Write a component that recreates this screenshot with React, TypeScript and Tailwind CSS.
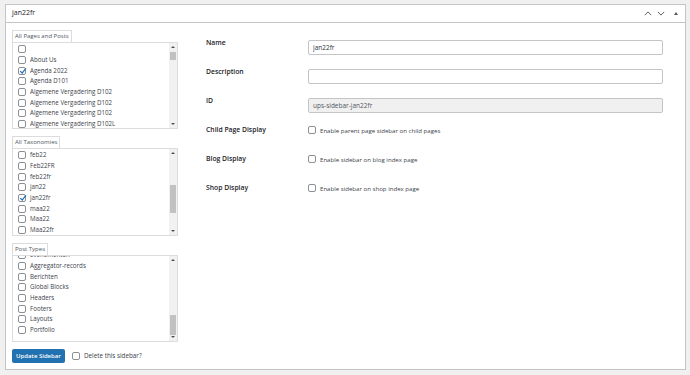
import { useState } from "react";

type Item = { label: string; checked?: boolean };

const pages: Item[] = [
  { label: "" },
  { label: "About Us" },
  { label: "Agenda 2022", checked: true },
  { label: "Agenda D101" },
  { label: "Algemene Vergadering D102" },
  { label: "Algemene Vergadering D102" },
  { label: "Algemene Vergadering D102" },
  { label: "Algemene Vergadering D102L" },
];

const taxonomies: Item[] = [
  { label: "feb22" },
  { label: "Feb22FR" },
  { label: "feb22fr" },
  { label: "jan22" },
  { label: "jan22fr", checked: true },
  { label: "maa22" },
  { label: "Maa22" },
  { label: "Maa22fr" },
];

const postTypes: Item[] = [
  { label: "Evenementen" },
  { label: "Aggregator-records" },
  { label: "Berichten" },
  { label: "Global Blocks" },
  { label: "Headers" },
  { label: "Footers" },
  { label: "Layouts" },
  { label: "Portfolio" },
];

function Box({ checked }: { checked?: boolean }) {
  return (
    <span className="relative flex h-[8px] w-[8px] shrink-0 items-center justify-center rounded-[2px] border border-[#8c8f94] bg-white">
      {checked && (
        <svg viewBox="0 0 10 10" className="absolute -top-[1px] left-0 h-[8px] w-[8px]">
          <path d="M1.5 5.2 L4 7.6 L8.6 1.8" fill="none" stroke="#2271b1" strokeWidth="1.6" />
        </svg>
      )}
    </span>
  );
}

function Checklist({
  title,
  items,
  height,
  thumbTop,
  thumbHeight,
  offset,
}: {
  title: string;
  items: Item[];
  height: string;
  thumbTop: string;
  thumbHeight: string;
  offset: string;
}) {
  return (
    <div className="flex flex-col">
      <div className="flex">
        <div className="h-[12px] border border-b-0 border-[#dcdcde] bg-white px-[2px] text-[6px] leading-[11px] text-[#50575e]">
          {title}
        </div>
      </div>
      <div className={`flex w-[166px] overflow-hidden border border-[#dcdcde] bg-white ${height}`}>
        <div className={`flex-1 overflow-hidden pl-[5px] ${offset}`}>
          {items.map((it, i) => (
            <div key={i} className="flex h-[10.7px] items-center gap-[4px]">
              <Box checked={it.checked} />
              <span className="whitespace-nowrap text-[6.2px] leading-none text-[#3c434a]">{it.label}</span>
            </div>
          ))}
        </div>
        <div className="relative w-[8px] bg-[#f1f1f1]">
          <div className="absolute left-[2px] top-[3px] h-0 w-0 border-x-[2px] border-b-[2px] border-x-transparent border-b-[#505050]" />
          <div className={`absolute left-[1px] w-[6px] bg-[#c1c1c1] ${thumbTop} ${thumbHeight}`} />
          <div className="absolute bottom-[3px] left-[2px] h-0 w-0 border-x-[2px] border-t-[2px] border-x-transparent border-t-[#505050]" />
        </div>
      </div>
    </div>
  );
}

function Row({ label, children }: { label: string; children: React.ReactNode }) {
  return (
    <div className="flex h-[29px] items-center">
      <div className="w-[102px] text-[6.8px] font-semibold text-[#1d2327]">{label}</div>
      <div className="flex-1">{children}</div>
    </div>
  );
}

function Option({ text }: { text: string }) {
  return (
    <div className="flex items-center gap-[4px]">
      <Box />
      <span className="text-[6.1px] text-[#3c434a]">{text}</span>
    </div>
  );
}

export default function App() {
  const [name, setName] = useState("jan22fr");
  const [desc, setDesc] = useState("");

  return (
    <div
      className="h-[375px] w-[690px] bg-[#f0f0f1] pl-[5px] pt-[4px]"
      style={{ fontFamily: '"Open Sans", "Noto Sans", sans-serif' }}
    >
      <div className="h-[366px] w-[681px] border border-[#c3c4c7] bg-white">
        <div className="flex h-[18px] items-center border-b border-[#c3c4c7] pl-[6px] pr-[6px]">
          <span className="flex-1 text-[7px] text-[#1d2327]">jan22fr</span>
          <svg viewBox="0 0 10 6" className="mr-[5px] h-[5px] w-[8px]">
            <path d="M1 5 L5 1 L9 5" fill="none" stroke="#50575e" strokeWidth="1.2" />
          </svg>
          <svg viewBox="0 0 10 6" className="mr-[9px] h-[5px] w-[8px]">
            <path d="M1 1 L5 5 L9 1" fill="none" stroke="#50575e" strokeWidth="1.2" />
          </svg>
          <div className="mr-[1px] h-0 w-0 border-x-[2.5px] border-b-[3px] border-x-transparent border-b-[#50575e]" />
        </div>

        <div className="flex pl-[6px] pt-[7px]">
          <div className="flex w-[166px] flex-col">
            <Checklist title="All Pages and Posts" items={pages} height="h-[87px]" thumbTop="top-[9px]" thumbHeight="h-[8px]" offset="pt-[1px]" />
            <div className="mt-[7px]">
              <Checklist title="All Taxonomies" items={taxonomies} height="h-[88px]" thumbTop="top-[36px]" thumbHeight="h-[28px]" offset="pt-[1px]" />
            </div>
            <div className="mt-[7px]">
              <Checklist title="Post Types" items={postTypes} height="h-[87px]" thumbTop="top-[59px]" thumbHeight="h-[20px]" offset="-mt-[6px]" />
            </div>
            <div className="mt-[7px] flex items-center gap-[7px]">
              <button className="h-[14px] w-[53px] rounded-[2px] bg-[#2271b1] text-[6px] font-semibold text-white">
                Update Sidebar
              </button>
              <Box />
              <span className="-ml-[3px] text-[6.3px] text-[#3c434a]">Delete this sidebar?</span>
            </div>
          </div>

          <div className="ml-[28px] flex w-[457px] -translate-y-[1px] flex-col">
            <Row label="Name">
              <input
                value={name}
                onChange={(e) => setName(e.target.value)}
                className="h-[15px] w-[355px] rounded-[2px] border border-[#c3c4c7] px-[4px] text-[6.5px] text-[#2c3338] outline-none"
              />
            </Row>
            <Row label="Description">
              <input
                value={desc}
                onChange={(e) => setDesc(e.target.value)}
                className="h-[15px] w-[355px] rounded-[2px] border border-[#c3c4c7] px-[4px] text-[6.5px] outline-none"
              />
            </Row>
            <Row label="ID">
              <input
                value="ups-sidebar-jan22fr"
                readOnly
                className="h-[15px] w-[355px] rounded-[2px] border border-[#c3c4c7] bg-[#f0f0f1] px-[4px] text-[6.5px] text-[#50575e] outline-none"
              />
            </Row>
            <Row label="Child Page Display">
              <Option text="Enable parent page sidebar on child pages" />
            </Row>
            <Row label="Blog Display">
              <Option text="Enable sidebar on blog index page" />
            </Row>
            <Row label="Shop Display">
              <Option text="Enable sidebar on shop index page" />
            </Row>
          </div>
        </div>
      </div>
    </div>
  );
}
